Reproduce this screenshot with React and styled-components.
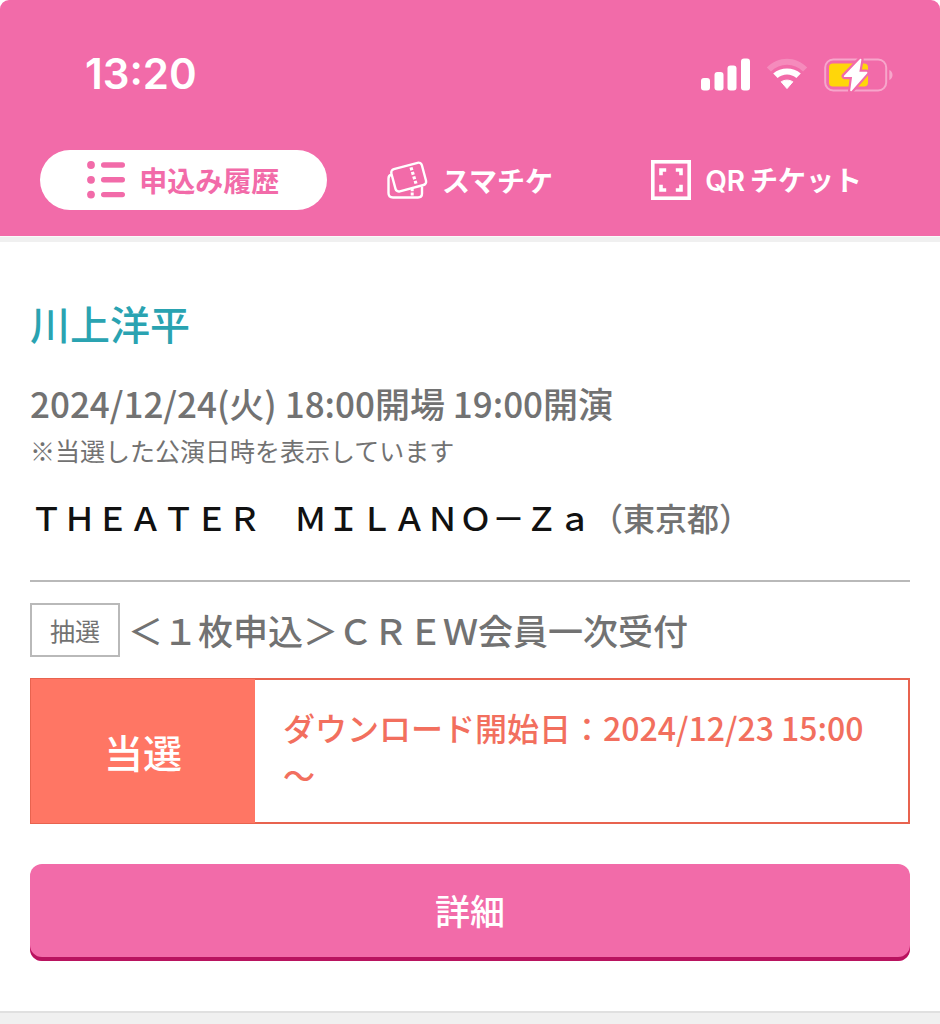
import React, { useState } from "react";
import styled, { createGlobalStyle } from "styled-components";

const GlobalStyle = createGlobalStyle`
    * {
        box-sizing: border-box;
    }
    body {
        margin: 0;
        background-color: #fff;
        color: #727272;
        font-family: "Noto Sans CJK JP", "Noto Sans", sans-serif;
    }
    h1, p {
        margin: 0;
    }
`;

const Page = styled.div`
    display: flex;
    flex-direction: column;
    min-height: 100vh;
`;

const Header = styled.header`
    background-color: #f26ba9;
    border-radius: 9px 9px 0 0;
    padding-bottom: 26px;
`;

const StatusBar = styled.div`
    display: flex;
    align-items: center;
    justify-content: space-between;
    height: 150px;
    padding: 0 47px 0 85px;
`;

const Clock = styled.time`
    padding-bottom: 2px;
    color: #fff;
    font-family: Inter, sans-serif;
    font-size: 42px;
    font-weight: 600;
    line-height: 50px;
`;

const StatusIcons = styled.div`
    display: flex;
    align-items: center;
    gap: 16px;
`;

const Nav = styled.nav`
    display: grid;
    grid-template-columns: repeat(3, 1fr);
    padding: 0 40px;
`;

const NavLink = styled.a`
    display: flex;
    align-items: center;
    justify-content: center;
    gap: 14px;
    height: 60px;
    border-radius: 30px;
    background-color: ${({ $active }) => ($active ? "#fff" : "transparent")};
    color: ${({ $active }) => ($active ? "#f26ba9" : "#fff")};
    font-size: 28px;
    font-weight: 700;
    line-height: 40px;
    text-decoration: none;
    white-space: nowrap;
`;

const Latin = styled.span`
    margin-right: 5px;
    font-family: Inter, sans-serif;
    font-weight: 600;
`;

const Strip = styled.div`
    height: 6px;
    background-color: #f0f0f0;
    border-top: 1px solid #fafafa;
`;

const Main = styled.main`
    padding: 51px 30px 50px;
`;

const Artist = styled.h1`
    color: #2aa3b1;
    font-size: 40px;
    font-weight: 500;
    line-height: 60px;
`;

const Schedule = styled.p`
    margin-top: 25px;
    font-size: 35px;
    font-weight: 500;
    line-height: 50px;
`;

const Note = styled.p`
    margin-top: 2px;
    font-size: 25px;
    line-height: 40px;
`;

const Venue = styled.p`
    margin-top: 22px;
    font-size: 32px;
    font-weight: 500;
    line-height: 50px;
`;

const VenueName = styled.span`
    color: #111;
    font-size: 33px;
`;

const Divider = styled.hr`
    height: 2px;
    margin: 38px 0 21px;
    border: 0;
    background-color: #b9b9b9;
`;

const Reception = styled.div`
    display: flex;
    align-items: center;
    gap: 8px;
    font-size: 35px;
    font-weight: 500;
    line-height: 50px;
`;

const Tag = styled.span`
    flex: none;
    padding: 5px 18px;
    border: 2px solid #b9b9b9;
    font-size: 25px;
    font-weight: 400;
    line-height: 40px;
`;

const Result = styled.section`
    display: flex;
    margin-top: 21px;
    border: 2px solid #e8634f;
`;

const ResultLabel = styled.div`
    display: flex;
    flex: none;
    align-items: center;
    justify-content: center;
    width: 224px;
    margin: -1px 0 -1px -1px;
    background-color: #ff7664;
    color: #fff;
    font-size: 39px;
    font-weight: 500;
    line-height: 50px;
`;

const ResultText = styled.p`
    flex: 1;
    padding: 24px 28px;
    color: #f26f5e;
    font-size: 32px;
    font-weight: 500;
    line-height: 47px;
`;

const DetailButton = styled.button`
    display: block;
    width: 100%;
    height: 97px;
    margin-top: 40px;
    padding: 0 0 5px;
    border: 0;
    border-radius: 12px;
    background-color: #f26ba9;
    box-shadow: inset 0 -4px 0 #b9135f;
    color: #fff;
    font-family: inherit;
    font-size: 35px;
    font-weight: 500;
    line-height: 50px;
    cursor: pointer;
`;

const Footer = styled.footer`
    flex: 1;
    min-height: 12px;
    border-top: 2px solid #e0e0e0;
    background-color: #f0f0f0;
`;

function SignalIcon() {
    return (
        <svg width="49" height="34" viewBox="0 0 49 34" fill="#fff" aria-hidden="true">
            <rect x="0" y="20" width="9" height="12.5" rx="3" />
            <rect x="13.5" y="14" width="9" height="18.5" rx="3" />
            <rect x="26.5" y="7.5" width="9" height="25" rx="3" />
            <rect x="40" y="0.5" width="9" height="32" rx="3" />
        </svg>
    );
}

function WifiIcon() {
    return (
        <svg width="42" height="34" viewBox="0 0 42 34" aria-hidden="true">
            <path
                d="M0.8 9.4C12-2.2 30-2.2 41.2 9.4L37 13.6C28 4.6 14 4.6 5 13.6Z"
                fill="#fff"
                fillOpacity="0.22"
            />
            <path d="M7.2 15.6C14.8 8.8 27.2 8.8 34.8 15.6L30.4 20.1C25.2 15.2 16.8 15.2 11.6 20.1Z" fill="#fff" />
            <path d="M15.2 23.8C18.6 21.6 23.4 21.6 26.8 23.8L21 30.6Z" fill="#fff" stroke="#fff" strokeLinejoin="round" />
        </svg>
    );
}

function BatteryIcon() {
    const bolt = "M36.6 1.5L20.6 18.2H29L27 32.4L42.6 14.6H34.4Z";
    return (
        <svg width="69" height="34" viewBox="0 0 69 34" aria-hidden="true">
            <rect
                x="1.2"
                y="1.5"
                width="61"
                height="31"
                rx="8"
                fill="none"
                stroke="#fff"
                strokeOpacity="0.4"
                strokeWidth="2"
            />
            <path d="M65.3 12C69.6 13.6 69.6 20.4 65.3 22Z" fill="#fff" fillOpacity="0.4" />
            <rect x="5" y="5.5" width="39" height="23" rx="4" fill="#ffd60a" />
            <path d={bolt} fill="#f26ba9" stroke="#f26ba9" strokeWidth="6" strokeLinejoin="round" />
            <path d={bolt} fill="#fff" stroke="#fff" strokeWidth="1.6" strokeLinejoin="round" />
        </svg>
    );
}

function ListIcon() {
    return (
        <svg width="38" height="38" viewBox="0 0 38 38" fill="currentColor" aria-hidden="true">
            {[4, 18.8, 33.6].map((y) => (
                <g key={y}>
                    <circle cx="4" cy={y} r="3.9" />
                    <rect x="14" y={y - 2.7} width="24" height="5.4" rx="2.7" />
                </g>
            ))}
        </svg>
    );
}

function TicketIcon() {
    return (
        <svg width="41" height="38" viewBox="0 0 41 38" fill="none" stroke="currentColor" aria-hidden="true">
            <path d="M4.5 13.8Q1.5 14.2 1.5 17.5V32Q1.5 36.5 6 36.5H31Q35 36.5 35 32.5V25.5" strokeWidth="2.4" />
            <rect
                x="5.9"
                y="4.6"
                width="31.6"
                height="23"
                rx="3.5"
                transform="rotate(-15 21.7 16.1)"
                strokeWidth="2.4"
            />
            <path d="M24 6.4L29 22.6" strokeWidth="3.2" strokeDasharray="3 1.7" />
            <path d="M25.2 27.4V35" strokeWidth="3" strokeDasharray="2.8 1.4" />
        </svg>
    );
}

function ScanIcon() {
    return (
        <svg width="40" height="40" viewBox="0 0 40 40" fill="none" stroke="currentColor" aria-hidden="true">
            <rect x="1.8" y="1.8" width="36.4" height="36.4" strokeWidth="3.6" />
            <path
                d="M10 15.2V10H15.2M24.8 10H30V15.2M30 24.8V30H24.8M15.2 30H10V24.8"
                strokeWidth="3.6"
            />
        </svg>
    );
}

const tabs = [
    { id: "history", label: "申込み履歴", Icon: ListIcon },
    { id: "ticket", label: "スマチケ", Icon: TicketIcon },
    { id: "qr", latin: "QR", label: "チケット", Icon: ScanIcon },
];

export default function App() {
    const [active, setActive] = useState("history");

    return (
        <Page>
            <GlobalStyle />
            <Header>
                <StatusBar>
                    <Clock>13:20</Clock>
                    <StatusIcons>
                        <SignalIcon />
                        <WifiIcon />
                        <BatteryIcon />
                    </StatusIcons>
                </StatusBar>
                <Nav>
                    {tabs.map(({ id, latin, label, Icon }) => (
                        <NavLink key={id} href={`#${id}`} $active={id === active} onClick={() => setActive(id)}>
                            <Icon />
                            <span>
                                {latin && <Latin>{latin}</Latin>}
                                {label}
                            </span>
                        </NavLink>
                    ))}
                </Nav>
            </Header>
            <Strip />
            <Main>
                <Artist>川上洋平</Artist>
                <Schedule>2024/12/24(火) 18:00開場 19:00開演</Schedule>
                <Note>※当選した公演日時を表示しています</Note>
                <Venue>
                    <VenueName>ＴＨＥＡＴＥＲ　ＭＩＬＡＮＯ－Ｚａ</VenueName>（東京都）
                </Venue>
                <Divider />
                <Reception>
                    <Tag>抽選</Tag>
                    <span>＜１枚申込＞ＣＲＥＷ会員一次受付</span>
                </Reception>
                <Result>
                    <ResultLabel>当選</ResultLabel>
                    <ResultText>ダウンロード開始日：2024/12/23 15:00～</ResultText>
                </Result>
                <DetailButton type="button">詳細</DetailButton>
            </Main>
            <Footer />
        </Page>
    );
}
